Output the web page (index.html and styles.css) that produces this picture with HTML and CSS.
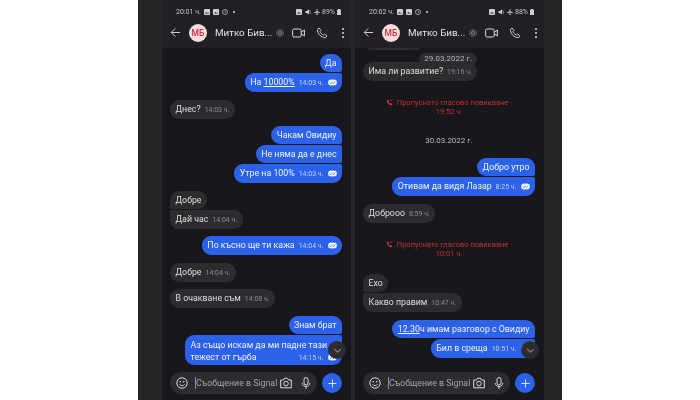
FILE: index.html

```html
<!DOCTYPE html>
<html lang="bg">
<head>
    <meta charset="UTF-8">
    <title>Signal</title>
    <link rel="stylesheet" href="styles.css">
</head>
<body>
    <svg class="icon-defs" xmlns="http://www.w3.org/2000/svg">
        <symbol id="i-back" viewBox="0 0 12 12"><path d="M11 6H1.5M5.8 1.6 1.4 6l4.4 4.4" fill="none" stroke="currentColor" stroke-width="1"/></symbol>
        <symbol id="i-ring" viewBox="0 0 8 8"><circle cx="4" cy="4" r="3.2" fill="none" stroke="currentColor" stroke-width=".8" stroke-dasharray="1 .5"/><circle cx="4" cy="4" r="1.5" fill="none" stroke="currentColor" stroke-width=".7"/></symbol>
        <symbol id="i-video" viewBox="0 0 13 10"><rect x=".6" y="1" width="8.6" height="8" rx="1.6" fill="none" stroke="currentColor" stroke-width="1"/><path d="M9.2 4.2 12.4 2v6L9.2 5.8" fill="none" stroke="currentColor" stroke-width="1"/></symbol>
        <symbol id="i-phone" viewBox="0 0 12 12"><path d="M1.4 2.4 3 1l2 2.4-1 1.2c.5 1.400 1.900 2.800 3.300 3.400L8.500 7l2.500 2-1.400 1.700C5 10.600 1.400 6.800 1.400 2.400Z" fill="none" stroke="currentColor" stroke-width=".9" stroke-linejoin="round"/></symbol>
        <symbol id="i-dots" viewBox="0 0 4 12"><circle cx="2" cy="2" r="1"/><circle cx="2" cy="6" r="1"/><circle cx="2" cy="10" r="1"/></symbol>
        <symbol id="i-sent" viewBox="0 0 10 7"><circle cx="3.500" cy="3.500" r="3.400" fill="currentColor"/><circle cx="6.500" cy="3.500" r="3.400" fill="currentColor"/><path d="M1.800 3.600 3 4.800 5 2.400M5 3.800l.9 1 2.200-2.600" fill="none" stroke="#2c62ea" stroke-width=".7"/></symbol>
        <symbol id="i-missed" viewBox="0 0 8 8"><path d="M1 1.500 2.300.8l1.100 1.700-.7.8c.3.900 1 1.600 1.900 2l.8-.8L7.200 5.600 6.500 7C3.500 7 1 4.500 1 1.500Z"/><path d="M4.400 .6 5.600 2 7.200.4" fill="none" stroke="currentColor" stroke-width=".8"/></symbol>
        <symbol id="i-emoji" viewBox="0 0 12 12"><circle cx="6" cy="6" r="5.200" fill="none" stroke="currentColor" stroke-width="1"/><circle cx="4.300" cy="4.800" r=".8"/><circle cx="7.700" cy="4.800" r=".8"/><path d="M3.300 7.200c.9 1.800 4.500 1.800 5.400 0" fill="none" stroke="currentColor" stroke-width=".9"/></symbol>
        <symbol id="i-camera" viewBox="0 0 12 12"><path d="M.7 3h2.800L4.500 1.300h3L8.500 3h2.800v7.800H.7Z" fill="none" stroke="currentColor" stroke-width="1" stroke-linejoin="round"/><circle cx="6" cy="6.600" r="2.300" fill="none" stroke="currentColor" stroke-width="1"/></symbol>
        <symbol id="i-mic" viewBox="0 0 12 12"><rect x="4" y=".6" width="4" height="7.400" rx="2" fill="none" stroke="currentColor" stroke-width="1"/><path d="M2.200 6c0 4.600 7.600 4.600 7.600 0M6 9.400v2.400" fill="none" stroke="currentColor" stroke-width="1"/></symbol>
        <symbol id="i-plus" viewBox="0 0 10 10"><path d="M5 .5v9M.5 5h9" fill="none" stroke="currentColor" stroke-width="1"/></symbol>
        <symbol id="i-down" viewBox="0 0 10 6"><path d="M1 1l4 4 4-4" fill="none" stroke="currentColor" stroke-width="1"/></symbol>
        <symbol id="i-photo" viewBox="0 0 6 6"><rect width="6" height="6" rx="1"/><path d="M1 4.500 2.500 3l1 1 .7-.6L5 4.500Z" fill="#202127"/></symbol>
        <symbol id="i-clock" viewBox="0 0 6 6"><circle cx="3" cy="3" r="2.500" fill="none" stroke="currentColor" stroke-width=".7"/><path d="M3 1.500V3l1 .6" fill="none" stroke="currentColor" stroke-width=".5"/></symbol>
        <symbol id="i-mute" viewBox="0 0 6 6"><path d="M.5 2h1.300L4 .5v5L1.800 4H.5Z"/><path d="M4.600 1 5.800 5" stroke="currentColor" stroke-width=".6"/></symbol>
        <symbol id="i-plane" viewBox="0 0 6 6"><path d="M2.600 0h.8v2.200L6 3.500v.7l-2.600-.7v1.400l.8.600V6L3 5.600 1.800 6v-.5l.8-.6V3.500L0 4.200v-.7l2.600-1.300Z"/></symbol>
        <symbol id="i-battery" viewBox="0 0 4 6"><path d="M1 0h2v.7h1V6H0V.7h1Z"/></symbol>
    </svg>

    <main class="shot">
        <section class="phone">
            <header class="top">
                <div class="status">
                    <span>20:01 ч.</span>
                    <svg class="mini"><use href="#i-photo"/></svg>
                    <svg class="mini"><use href="#i-photo"/></svg>
                    <svg class="mini"><use href="#i-clock"/></svg>
                    <span class="status-dot"></span>
                    <span class="status-right">
                        <svg class="mini"><use href="#i-photo"/></svg>
                        <svg class="mini"><use href="#i-mute"/></svg>
                        <svg class="mini"><use href="#i-plane"/></svg>
                        <span>89%</span>
                        <svg class="mini-battery"><use href="#i-battery"/></svg>
                    </span>
                </div>
                <div class="bar">
                    <svg class="bar-back"><use href="#i-back"/></svg>
                    <div class="avatar">МБ</div>
                    <div class="name">Митко Бив...</div>
                    <svg class="bar-ring"><use href="#i-ring"/></svg>
                    <svg class="bar-video"><use href="#i-video"/></svg>
                    <svg class="bar-phone"><use href="#i-phone"/></svg>
                    <svg class="bar-dots"><use href="#i-dots"/></svg>
                </div>
            </header>
            <div class="messages">
                <div class="group out">
                    <div class="msg">Да</div>
                    <div class="msg timed">На <u>10000%</u><span class="meta">14:03 ч.</span><svg class="sent"><use href="#i-sent"/></svg></div>
                </div>
                <div class="group in">
                    <div class="msg timed">Днес?<span class="meta">14:03 ч.</span></div>
                </div>
                <div class="group out">
                    <div class="msg">Чакам Овидиу</div>
                    <div class="msg">Не няма да е днес</div>
                    <div class="msg timed">Утре на 100%<span class="meta">14:03 ч.</span><svg class="sent"><use href="#i-sent"/></svg></div>
                </div>
                <div class="group in">
                    <div class="msg">Добре</div>
                    <div class="msg timed">Дай час<span class="meta">14:04 ч.</span></div>
                </div>
                <div class="group out">
                    <div class="msg timed">По късно ще ти кажа<span class="meta">14:04 ч.</span><svg class="sent"><use href="#i-sent"/></svg></div>
                </div>
                <div class="group in">
                    <div class="msg timed">Добре<span class="meta">14:04 ч.</span></div>
                </div>
                <div class="group in">
                    <div class="msg timed">В очакване съм<span class="meta">14:08 ч.</span></div>
                </div>
                <div class="group out">
                    <div class="msg">Знам брат</div>
                    <div class="msg long">Аз също искам да ми падне тази<br><span class="long-end"><span class="meta">14:15 ч.</span><svg class="sent"><use href="#i-sent"/></svg></span>тежест от гърба</div>
                </div>
            </div>
            <div class="composer">
                <div class="field">
                    <svg class="field-icon"><use href="#i-emoji"/></svg>
                    <span class="caret"></span>
                    <span class="placeholder">Съобщение в Signal</span>
                    <svg class="field-icon"><use href="#i-camera"/></svg>
                    <svg class="field-icon"><use href="#i-mic"/></svg>
                </div>
                <div class="add"><svg class="add-icon"><use href="#i-plus"/></svg></div>
            </div>
            <div class="jump"><svg class="jump-icon"><use href="#i-down"/></svg></div>
        </section>

        <section class="phone">
            <header class="top">
                <div class="status">
                    <span>20:02 ч.</span>
                    <svg class="mini"><use href="#i-photo"/></svg>
                    <svg class="mini"><use href="#i-photo"/></svg>
                    <svg class="mini"><use href="#i-clock"/></svg>
                    <span class="status-dot"></span>
                    <span class="status-right">
                        <svg class="mini"><use href="#i-photo"/></svg>
                        <svg class="mini"><use href="#i-mute"/></svg>
                        <svg class="mini"><use href="#i-plane"/></svg>
                        <span>88%</span>
                        <svg class="mini-battery"><use href="#i-battery"/></svg>
                    </span>
                </div>
                <div class="bar">
                    <svg class="bar-back"><use href="#i-back"/></svg>
                    <div class="avatar">МБ</div>
                    <div class="name">Митко Бив...</div>
                    <svg class="bar-ring"><use href="#i-ring"/></svg>
                    <svg class="bar-video"><use href="#i-video"/></svg>
                    <svg class="bar-phone"><use href="#i-phone"/></svg>
                    <svg class="bar-dots"><use href="#i-dots"/></svg>
                </div>
            </header>
            <div class="messages">
                <div class="group in">
                    <div class="msg peek"></div>
                </div>
                <div class="group in">
                    <div class="msg timed">Има ли развитие?<span class="meta">19:16 ч.</span></div>
                </div>
                <div class="date-pill">29.03.2022 г.</div>
                <div class="missed"><svg class="missed-icon"><use href="#i-missed"/></svg>Пропуснато гласово повикване ·<br>19:52 ч.</div>
                <div class="date">30.03.2022 г.</div>
                <div class="group out">
                    <div class="msg">Добро утро</div>
                    <div class="msg timed">Отивам да видя Лазар<span class="meta">8:25 ч.</span><svg class="sent"><use href="#i-sent"/></svg></div>
                </div>
                <div class="group in">
                    <div class="msg timed">Доброоо<span class="meta">8:59 ч.</span></div>
                </div>
                <div class="missed"><svg class="missed-icon"><use href="#i-missed"/></svg>Пропуснато гласово повикване ·<br>10:01 ч.</div>
                <div class="group in">
                    <div class="msg">Ехо</div>
                    <div class="msg timed">Какво правим<span class="meta">10:47 ч.</span></div>
                </div>
                <div class="group out">
                    <div class="msg"><u>12.30</u>ч имам разговор с Овидиу</div>
                    <div class="msg timed">Бил в среща<span class="meta">10:51 ч.</span><svg class="sent"><use href="#i-sent"/></svg></div>
                </div>
            </div>
            <div class="composer">
                <div class="field">
                    <svg class="field-icon"><use href="#i-emoji"/></svg>
                    <span class="caret"></span>
                    <span class="placeholder">Съобщение в Signal</span>
                    <svg class="field-icon"><use href="#i-camera"/></svg>
                    <svg class="field-icon"><use href="#i-mic"/></svg>
                </div>
                <div class="add"><svg class="add-icon"><use href="#i-plus"/></svg></div>
            </div>
            <div class="jump"><svg class="jump-icon"><use href="#i-down"/></svg></div>
        </section>
    </main>
</body>
</html>
```

FILE: styles.css

```css
html, body {
    margin: 0;
    padding: 0;
    background-color: white;
}
body {
    width: 700px;
    height: 400px;
    overflow: hidden;
    font-family: Roboto, "Noto Sans", sans-serif;
}
.icon-defs {
    display: none;
}
.shot {
    display: flex;
    gap: 4px;
    width: 424px;
    height: 400px;
    margin-left: 138px;
    padding: 0 18px 0 24px;
    box-sizing: border-box;
    background-color: #252525;
    filter: blur(0.4px);
}
.phone {
    position: relative;
    display: flex;
    flex-direction: column;
    width: 189px;
    height: 400px;
    background-color: #17171c;
    overflow: hidden;
}
.top {
    flex: none;
    height: 48px;
    background-color: #202127;
    color: #dcdcdc;
}
.status {
    display: flex;
    align-items: center;
    gap: 2px;
    height: 12px;
    padding: 6px 10px 0 14px;
    font-size: 7px;
    color: #c8c8c8;
}
.mini {
    width: 6px;
    height: 6px;
    margin-left: 1px;
    fill: #d0d0d0;
    color: #d0d0d0;
}
.status-dot {
    width: 2px;
    height: 2px;
    margin-left: 3px;
    border-radius: 50%;
    background-color: #d0d0d0;
}
.status-right {
    display: flex;
    align-items: center;
    gap: 2px;
    margin-left: auto;
}
.mini-battery {
    width: 4px;
    height: 6px;
    fill: #d0d0d0;
}
.bar {
    display: flex;
    align-items: center;
    height: 28px;
    padding-top: 1px;
    box-sizing: border-box;
}
.bar-back {
    width: 11px;
    height: 11px;
    margin-left: 8px;
}
.avatar {
    width: 18px;
    height: 18px;
    margin-left: 8px;
    border-radius: 50%;
    background-color: #fbdcdc;
    color: #cf2f36;
    font-size: 8.5px;
    font-weight: 500;
    line-height: 18px;
    text-align: center;
}
.name {
    width: 58px;
    margin-left: 8px;
    font-size: 9.8px;
    white-space: nowrap;
    color: #e4e4e4;
}
.bar-ring {
    width: 8px;
    height: 8px;
    margin-left: 3px;
    color: #b8b8b8;
}
.bar-video {
    width: 13px;
    height: 10px;
    margin-left: 8px;
}
.bar-phone {
    width: 12px;
    height: 12px;
    margin-left: 11px;
}
.bar-dots {
    width: 4px;
    height: 12px;
    margin-left: 13px;
    fill: #dcdcdc;
}
.messages {
    position: relative;
    flex: 1;
    padding: 6px 9px 0 8px;
    overflow: hidden;
    font-size: 8.8px;
    line-height: 12px;
}
.group {
    display: flex;
    flex-direction: column;
    gap: 1px;
}
.group + .group {
    margin-top: 7.5px;
}
.group.out {
    align-items: flex-end;
}
.group.in {
    align-items: flex-start;
}
.msg {
    height: 12px;
    padding: 3px 5.5px;
    border-radius: 9px;
    white-space: nowrap;
}
.msg.timed {
    padding-bottom: 4px;
}
.out .msg {
    background-color: #2c62ea;
    color: #f0f3fc;
}
.in .msg {
    background-color: #2d2d30;
    color: #dedede;
}
.out .msg:not(:first-child) {
    border-top-right-radius: 2px;
}
.out .msg:not(:last-child) {
    border-bottom-right-radius: 2px;
}
.in .msg:not(:first-child) {
    border-top-left-radius: 2px;
}
.in .msg:not(:last-child) {
    border-bottom-left-radius: 2px;
}
.meta {
    margin-left: 4px;
    font-size: 7px;
    color: #8d8d91;
}
.out .meta {
    color: #c3d2f7;
}
.sent {
    width: 9px;
    height: 7px;
    margin-left: 4px;
    color: #f4f6fc;
    vertical-align: -1px;
}
.msg.long {
    width: 146px;
    height: 24px;
    padding-top: 4px;
    padding-bottom: 2px;
}
.long-end {
    float: right;
}
.msg.peek {
    width: 50px;
    height: 12px;
    margin-top: -22px;
    margin-bottom: 1.5px;
}
.date-pill {
    position: absolute;
    top: 5px;
    right: 67px;
    padding: 1px 5px;
    border-radius: 6px;
    background-color: #2d2d30;
    color: #b9b9b9;
    font-size: 8px;
    line-height: 10px;
}
.date {
    margin: 20px 0 12px;
    color: #bcbcbc;
    font-size: 8px;
    line-height: 10px;
    text-align: center;
}
.missed {
    margin: 18.5px 0 16px;
    color: #c5302f;
    font-size: 7.5px;
    line-height: 8.5px;
    text-align: center;
}
.missed-icon {
    width: 7px;
    height: 7px;
    margin-right: 4px;
    fill: #e0393a;
    color: #e0393a;
    vertical-align: -1px;
}
.composer {
    flex: none;
    display: flex;
    align-items: center;
    gap: 5px;
    padding: 0 9px 6px 8px;
}
.field {
    flex: 1;
    display: flex;
    align-items: center;
    min-width: 0;
    height: 22px;
    padding: 0 5px 0 6px;
    border-radius: 11px;
    background-color: #2d2d30;
    color: #dcdcdc;
}
.field-icon {
    flex: none;
    width: 12px;
    height: 12px;
    margin-left: 8px;
    fill: #dcdcdc;
}
.field-icon:first-child {
    margin-left: 0;
}
.caret {
    width: 1px;
    height: 12px;
    margin-left: 7px;
    background-color: #6d8fe8;
}
.placeholder {
    flex: 1;
    min-width: 0;
    margin-right: -6px;
    font-size: 8.8px;
    white-space: nowrap;
    color: #a4a4a8;
}
.add {
    flex: none;
    display: flex;
    align-items: center;
    justify-content: center;
    width: 20px;
    height: 20px;
    border-radius: 50%;
    background-color: #2c62ea;
    color: #f0f3fc;
}
.add-icon {
    width: 9px;
    height: 9px;
}
.jump {
    position: absolute;
    top: 341px;
    left: 166px;
    display: flex;
    align-items: center;
    justify-content: center;
    width: 18px;
    height: 18px;
    border-radius: 50%;
    background-color: #2d2d30;
    color: #cfcfcf;
}
.jump-icon {
    width: 9px;
    height: 5px;
}
```
